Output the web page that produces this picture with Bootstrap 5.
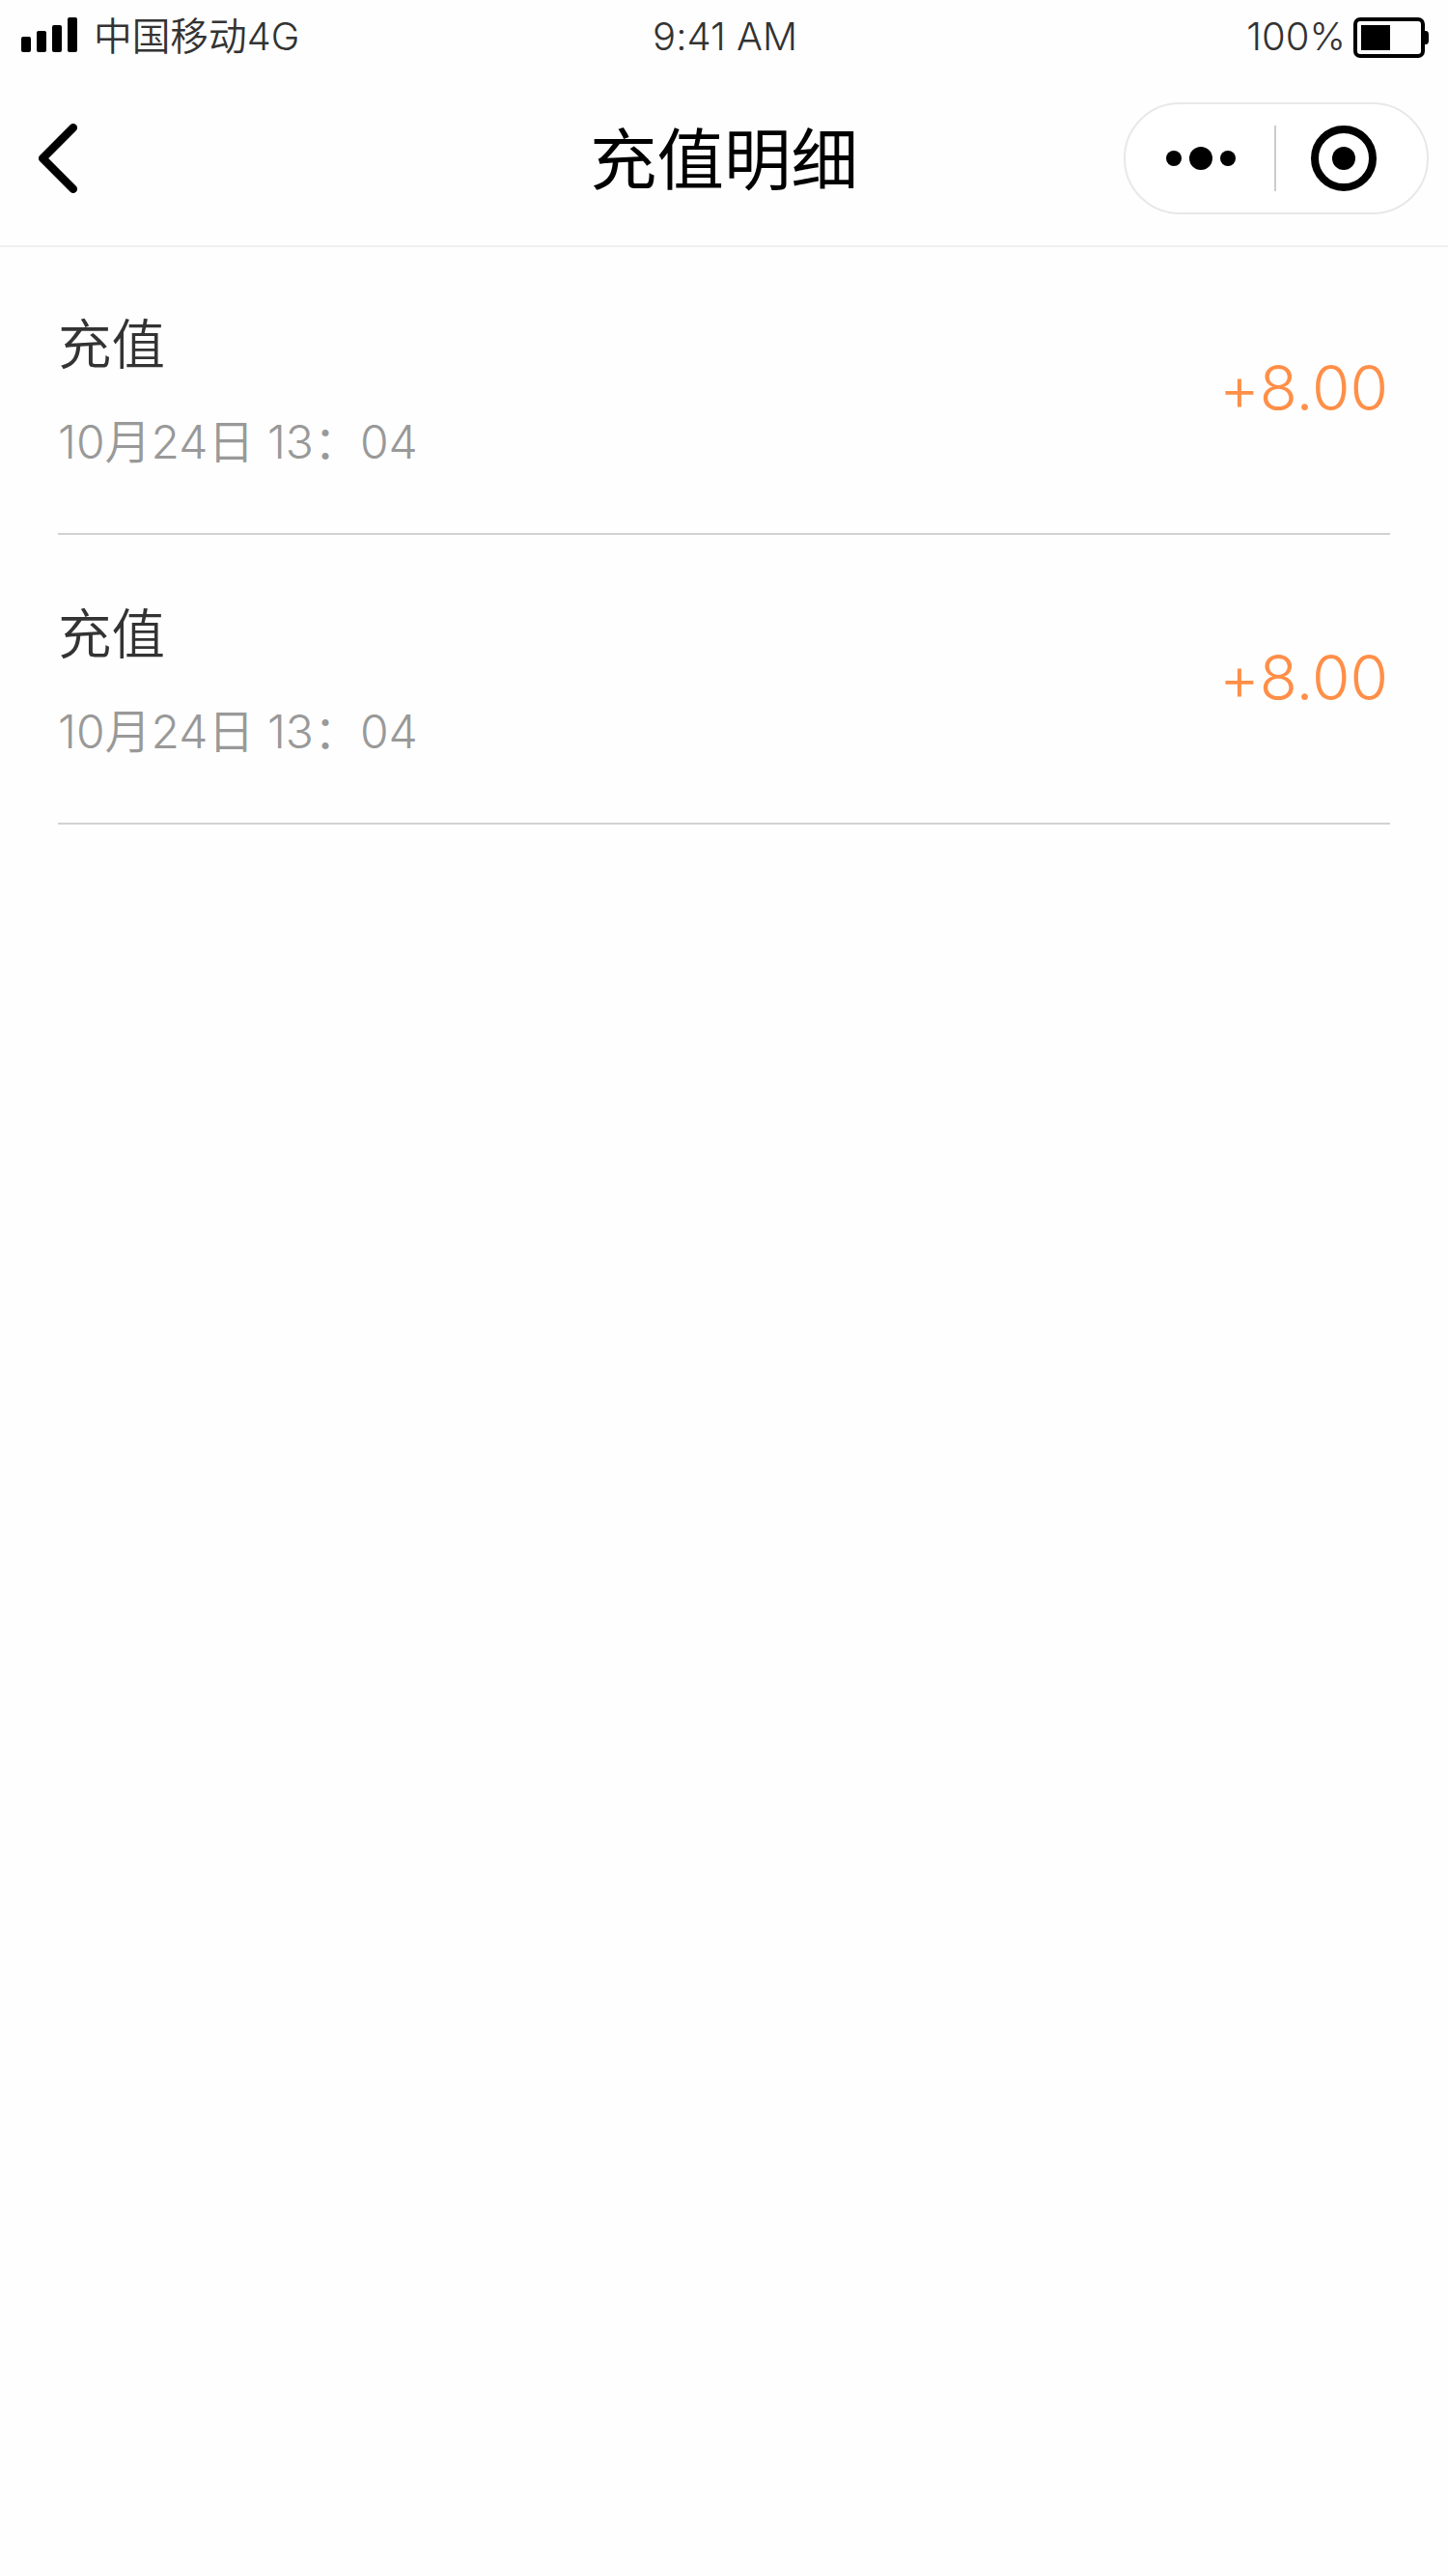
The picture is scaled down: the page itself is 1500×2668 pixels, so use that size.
<!DOCTYPE html>
<html lang="zh-CN">
<head>
<meta charset="utf-8">
<meta name="viewport" content="width=device-width, initial-scale=1">
<title>充值明细</title>
<link href="https://cdn.jsdelivr.net/npm/bootstrap@5.3.0/dist/css/bootstrap.min.css" rel="stylesheet">
<style>
body { font-family: Inter, "Noto Sans CJK SC", sans-serif; font-feature-settings: "calt" 0; background: #fefefe; color: #333; min-height: 2668px; }
svg { display: block; flex: none; }
.status-bar { height: 76px; padding: 0 20px 0 22px; font-size: 39.7px; font-weight: 350; line-height: 76px; }
.side { flex: 1 1 0; }
.signal { margin: 0 17px 4px 0; }
.battery { margin: 2px 0 0 8px; }
.clock { font-size: 40px; }
.percent { font-size: 40px; }
.title-bar { height: 178px; padding: 0 20px; box-shadow: 0 2px #f0f0f0; }
.title-bar h1 { font-size: 69.5px; line-height: 100px; padding-top: 3px; font-weight: 400; color: #000; }
.title-row { height: 176px; }
.back { margin-left: 20px; }
.capsule { width: 316px; height: 116px; border: 2px solid #e8e8e8; background: #fff; }
.record { height: 300px; border-bottom: 2px solid #d2d2d2; }
.records { padding: 0 60px; }
.kind { font-size: 55.5px; line-height: 80px; font-weight: 350; padding-top: 4px; }
.when { font-size: 48px; line-height: 70px; font-weight: 350; color: #999; margin-top: 26px; }
.amount { font-size: 64px; line-height: 90px; font-weight: 350; color: #ff8f48; margin: -2px 2px 0 0; }
</style>
</head>
<body>
<header>
  <div class="status-bar d-flex align-items-center">
    <div class="side d-flex align-items-center">
      <svg class="signal" width="58" height="36" viewBox="0 0 58 36"><rect y="20" width="10" height="16" rx="2"/><rect x="16" y="14" width="10" height="22" rx="2"/><rect x="32" y="8" width="10" height="28" rx="2"/><rect x="48" width="10" height="36" rx="2"/></svg>
      <span class="carrier">中国移动4G</span>
    </div>
    <span class="clock">9:41 AM</span>
    <div class="side d-flex align-items-center justify-content-end">
      <span class="percent">100%</span>
      <svg class="battery" width="78" height="42" viewBox="0 0 78 42"><rect x="2" y="2" width="70" height="38" rx="5" fill="none" stroke="#000" stroke-width="4"/><rect x="8" y="8" width="30" height="26"/><path d="M72 14h3q3 0 3 4v6q0 4-3 4h-3z"/></svg>
    </div>
  </div>
  <nav class="title-bar">
    <div class="title-row d-flex align-items-center">
      <div class="side"><svg class="back" width="40" height="72" viewBox="0 0 40 72" fill="none" stroke="#000" stroke-width="8.5" stroke-linecap="round" stroke-linejoin="round"><path d="M35.8 4.2 4.2 36l31.6 31.8"/></svg></div>
      <h1 class="m-0">充值明细</h1>
      <div class="side d-flex justify-content-end">
        <div class="capsule rounded-pill"><svg width="312" height="112" viewBox="2 2 312 112"><circle cx="52" cy="58" r="8"/><circle cx="80" cy="58" r="12"/><circle cx="108" cy="58" r="8"/><path d="M156 24h2v68h-2z" fill="#ccc"/><circle cx="228" cy="58" r="30" fill="none" stroke="#000" stroke-width="8"/><circle cx="228" cy="58" r="12"/></svg></div>
      </div>
    </div>
  </nav>
</header>
<main class="records">
  <div class="record d-flex align-items-center justify-content-between">
    <div><div class="kind">充值</div><div class="when">10月24日 13：04</div></div>
    <div class="amount">+8.00</div>
  </div>
  <div class="record d-flex align-items-center justify-content-between">
    <div><div class="kind">充值</div><div class="when">10月24日 13：04</div></div>
    <div class="amount">+8.00</div>
  </div>
</main>
<script src="https://cdn.jsdelivr.net/npm/bootstrap@5.3.0/dist/js/bootstrap.bundle.min.js"></script>
</body>
</html>
